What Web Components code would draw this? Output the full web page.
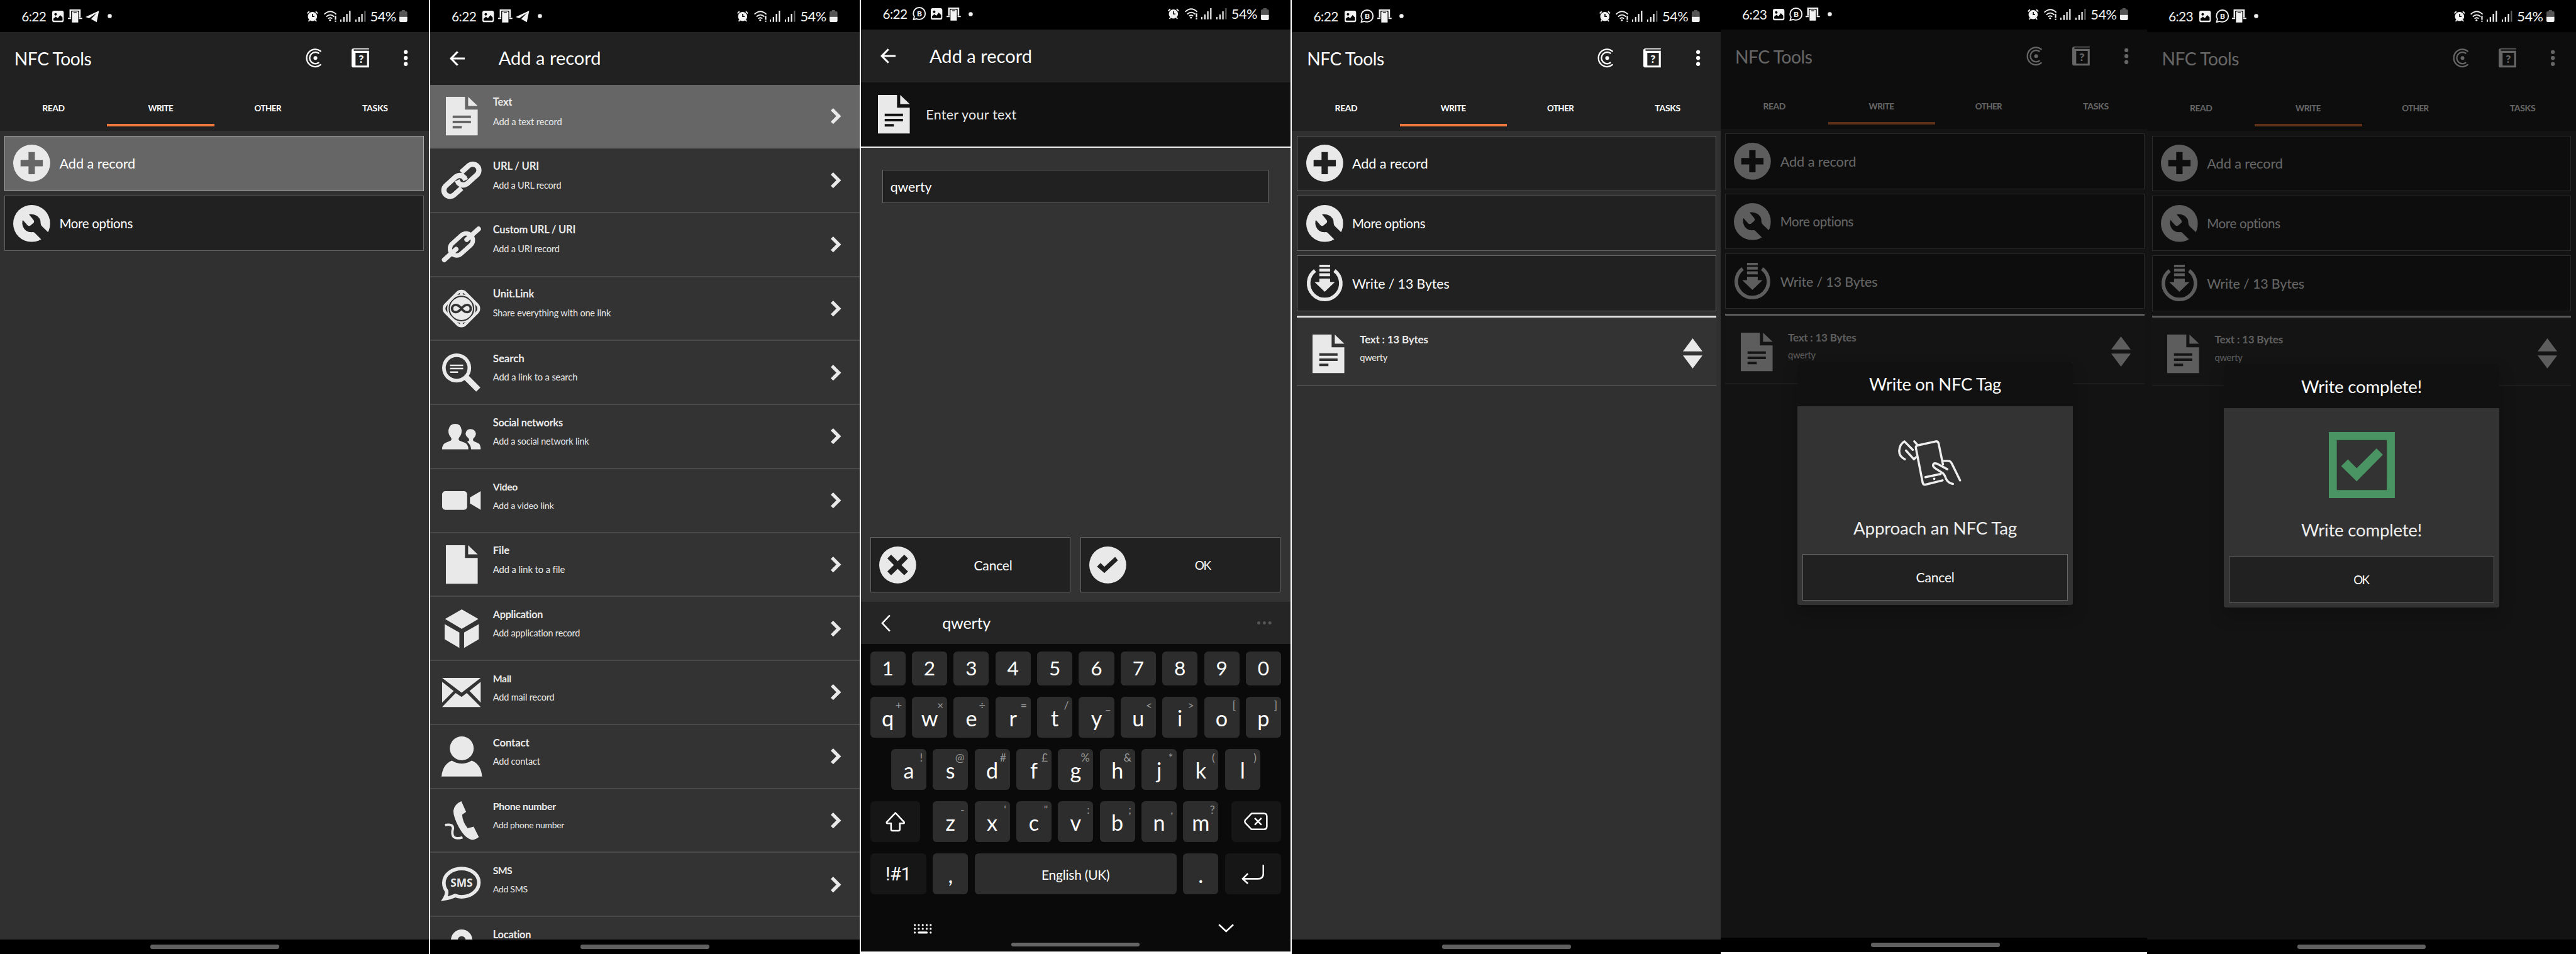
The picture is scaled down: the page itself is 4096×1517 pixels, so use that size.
<!DOCTYPE html>
<html lang="en">
<head>
<meta charset="utf-8">
<title>NFC Tools</title>
<style>
html,body{margin:0;padding:0;background:#fff;overflow:hidden}
body{width:4096px;height:1517px;font-family:Lato,"Open Sans",sans-serif;color:#fff}
screen-gallery{zoom:.6321}
</style>
</head>
<body>
<screen-gallery></screen-gallery>
<script>
const L='#e9e9e9';
/* name: [width, height, svg body] */
const ICONS={
plus:[93,93,`<path fill-rule="evenodd" d="M46.5 0a46.5 46.5 0 1 1 0 93a46.5 46.5 0 1 1 0-93zM38.5 18.5v20h-20v16h20v20h16v-20h20v-16h-20v-20z"/>`],
wrench:[93,93,`<mask id="m"><rect width="93" height="93" fill="#fff"/><path fill="#000" d="M39.500 23.500Q50 21 59 27Q70 34 69 46Q69 51 73 54L93 73.500L79 95L54 70Q51 67 46 68.500Q30 68 25 55Q21 46 24 37.500L36 51Q40 54 44 51L51 45Q54 42 51 37.500z"/></mask><circle cx="46.500" cy="46.500" r="46.500" mask="url(#m)"/>`],
write:[93,94,`<path d="M22 14.500A40.500 40.500 0 1 0 71 14.500" fill="none" stroke="currentColor" stroke-width="9"/><path d="M33 0h27v6H33zM33 10h27v7H33zM33 21.500h27V29H33zM33 35h27v8.500h12L46.500 68 21 43.500h12z"/>`],
cross:[93,93,`<path fill-rule="evenodd" d="M46.500 0a46.500 46.500 0 1 1 0 93a46.500 46.500 0 1 1 0-93zM30 20.500L20.500 30L37 46.500L20.500 63L30 72.500L46.500 56L63 72.500L72.500 63L56 46.500L72.500 30L63 20.500L46.500 37z"/>`],
tick:[93,93,`<path fill-rule="evenodd" d="M46.500 0a46.500 46.500 0 1 1 0 93a46.500 46.500 0 1 1 0-93zM65 26L38 51L28.500 41.500L19.500 50.500L38 67L72 35z"/>`],
doc:[80,97,`<path fill-rule="evenodd" d="M0 0H48V32H80V97H0zM17 47h46v6.500H17zM17 60h46v6.500H17zM17 73h23v6.500H17z"/><path d="M56 0L80 23H56z"/>`],
file:[80,97,`<path d="M0 0H48V32H80V97H0z"/><path d="M56 0L80 23H56z"/>`],
url:[97,97,`<g transform="translate(48.500 48.500) rotate(-42)" fill="none" stroke="currentColor" stroke-width="13"><path d="M-13 15H-38A15.500 15.500 0 0 1 -38 -16H-5Q9 -14 10 0L8 7"/><path d="M13 -15H38A15.500 15.500 0 0 1 38 16H5Q-9 14 -10 0L-8 -7"/></g>`],
curl:[97,97,`<g transform="translate(48.500 48.500) rotate(-42)" fill="none" stroke="currentColor" stroke-linecap="round"><rect x="-33" y="-17" width="66" height="34" rx="17" stroke-width="11"/><path d="M-58 0H-18M58 0H18" stroke-width="12"/></g>`],
unit:[97,97,`<rect x="13.500" y="13.500" width="70" height="70" rx="14" transform="rotate(45 48.500 48.500)" fill="none" stroke="currentColor" stroke-width="7"/><circle cx="48.500" cy="48.500" r="34" fill="none" stroke="currentColor" stroke-width="3.500"/><circle cx="48.500" cy="48.500" r="29"/><path d="M48.500 5v11M48.500 81v11" stroke="currentColor" stroke-width="7"/><path d="M48.500 48.500C42 40 37 39.500 34 39.500a9 9 0 0 0 0 18C38 57.500 42 56 48.500 48.500S59 39.500 63 39.500a9 9 0 0 1 0 18C60 57.500 55 57 48.500 48.500z" fill="none" stroke="#333" stroke-width="6"/>`],
search:[97,97,`<circle cx="36.500" cy="36.500" r="32" fill="none" stroke="currentColor" stroke-width="9"/><path d="M20 28h33v4H20zM20 36h33v4H20zM20 45h20v4H20z"/><path d="M60 60L91 91" stroke="currentColor" stroke-width="15"/>`],
social:[97,64,`<path d="M0 64Q0 50 10 47L22 42Q25 39 22 34Q15 27 16 15Q19 0 33 0Q47 0 49 15Q50 27 43 34Q40 39 43 42L56 47Q66 50 66 64z"/><path d="M73 64Q72 52 63 45L68 42Q69 39 65 35Q59 30 59 24Q61 13 71 13Q83 13 85 24Q85 31 79 36Q76 41 80 44L89 48Q97 50 97 64z"/>`],
video:[97,47,`<rect width="63" height="47" rx="8"/><path d="M70 16L97 0V47L70 31z"/>`],
app:[86,97,`<path d="M43 0L85 24L43 49L1 24zM0 37L37 58V97L0 75zM86 37L49 58V97L86 75z"/>`],
mail:[97,73,`<path d="M0 0H97L49 37zM0 10L29 33L0 62zM97 10L69 33L97 62zM0 73L34 38L49 48L62 38L97 73z"/>`],
contact:[102,101,`<circle cx="51" cy="30" r="30"/><path d="M0 101C2 80 12 66 26 61Q51 76 76 61C90 66 101 80 102 101z"/>`],
phone:[86,97,`<path d="M42 0L54 27L44 34Q45 52 58 68L73 64L86 90Q76 98 67 97Q50 92 36 66Q22 40 22 24Q24 8 42 0z"/><path d="M1 60Q21 56 21 68Q17 84 23 90Q30 96 45 91" fill="none" stroke="currentColor" stroke-width="6"/>`],
sms:[97,89,`<path d="M6 81Q13 70 11 61Q4 52 4.500 40C5 20 25 5 49 5S92.500 20 92.500 40S73 76 49 76Q40 76 33 73Q20 79 6 81z" fill="none" stroke="currentColor" stroke-width="9"/><text x="49" y="50" font-family="Open Sans" font-weight="700" font-size="28" text-anchor="middle" textLength="56" lengthAdjust="spacingAndGlyphs">SMS</text>`],
pin:[54,97,`<path fill-rule="evenodd" d="M27 0a27 27 0 0 1 27 27Q54 50 27 97Q0 50 0 27A27 27 0 0 1 27 0zM27 17a10 10 0 1 0 .1 0z"/>`],
sort:[49,76,`<path d="M24.500 0L49 33H0zM0 43H49L24.500 76z"/>`],
next:[25,40,`<path d="M3 3L20 20L3 37" fill="none" stroke="currentColor" stroke-width="8.500"/>`],
back:[38,38,`<path d="M38 19H4M20 2L3.500 19L20 36" fill="none" stroke="currentColor" stroke-width="5"/>`],
tag:[38,48,`<circle cx="23" cy="24" r="4.800"/><g fill="none" stroke="currentColor" stroke-width="3.600" stroke-linecap="round"><path d="M36 7Q30 2 23 2A22 22 0 0 0 23 46Q30 46 36 41"/><path d="M31 12Q27 9.500 23 9.500A14.500 14.500 0 0 0 23 38.500Q27 38.500 31 36"/></g>`],
book:[44,48,`<path fill-rule="evenodd" d="M6 0H44V2.500H6Q4 4 6 6H44V48H5Q0 48 0 43V5Q0 0 6 0zM10 11V43H39V11z"/><text x="24.500" y="36.500" font-family="Lato" font-weight="900" font-size="28" text-anchor="middle">?</text>`],
dots:[10,42,`<circle cx="5" cy="6" r="5"/><circle cx="5" cy="21" r="5"/><circle cx="5" cy="36" r="5"/>`],
image:[29,29,`<path fill-rule="evenodd" d="M5 0H24Q29 0 29 5V24Q29 29 24 29H5Q0 29 0 24V5Q0 0 5 0zM8.500 6a3.200 3.200 0 1 0 .1 0zM3 23Q3 25 5 25H24Q26 25 26 23V17L20 11L14 19L9 15L3 20z"/>`],
device:[36,33,`<path d="M4 0H32V20H28V5Q28 3 26 3H10Q8 3 8 5V20H4zM0 21H8V24H0zM28 21H36V24H28z"/><path fill-rule="evenodd" d="M12 5H24Q26 5 26 7V33H10V7Q10 5 12 5zM14 7V9H22V7z"/>`],
plane:[34,29,`<path d="M34 0L0 16L9 19L28 6L14 21L28 29z"/>`],
wa:[34,34,`<path d="M2.500 31.500L4.500 24Q2 21 2 16.500A15 15 0 1 1 17 31.500Q13 31.500 10 30z" fill="none" stroke="currentColor" stroke-width="3"/><text x="17.300" y="23.500" font-family="Lato" font-weight="900" font-size="19" text-anchor="middle">B</text>`],
dot:[11,11,`<circle cx="5.500" cy="5.500" r="5.200"/>`],
alarm:[28,28,`<path fill-rule="evenodd" d="M14 3A11.500 11.500 0 1 1 13.900 3zM13 8V16H19V13.500H15.500V8z"/><path d="M1 7L6 2M27 7L22 2M4 27L7 23M24 27L21 23" stroke="currentColor" stroke-width="3"/>`],
wifi:[33,28,`<g fill="none" stroke="currentColor" stroke-width="3"><path d="M1 9Q16 -5 31 9M6 15Q16 6 26 15M10.500 20Q16 15.500 21 20"/></g><circle cx="15.500" cy="24" r="2.300"/><path d="M27.500 13H31V23H27.500zM27.500 25H31V28H27.500z"/>`],
signal:[27,28,`<path d="M0 22h3v6H0zM7.500 16h3.500v12H7.500zM15 8h3.500v20H15zM22.500 0H26v28h-3.500z"/>`],
signal2:[27,28,`<path d="M0 22h3v6H0zM7.500 16h3.500v12H7.500zM15 8h3.500v20H15z"/><path d="M22.500 0H26v28h-3.500z" opacity=".4"/>`],
battery:[20,30,`<path d="M6 0h8v3h3q3 0 3 3v11H0V6q0-3 3-3h3z" fill="#555"/><path d="M0 17H20V27Q20 30 17 30H3Q0 30 0 27z"/>`],
bigtick:[166,166,`<path fill-rule="evenodd" fill="#4a9463" d="M0 0H166V166H0zM20 20V146H146V20zM120 41L136 57L70 124L31 86L48 69L70 91z"/>`],
tap:[186,114,`<g fill="none" stroke="currentColor" stroke-width="5.500" stroke-linecap="round" stroke-linejoin="round"><path d="M17 48Q2 40 3 26Q4 10 16 3L37 24M20 26L40 48L45 43M41 3L49 12"/><path d="M112 101L68 112Q63 112 62 107L45 20Q44 15 49 13L95 3Q100 2 102 8L113 61M69 93L107 85"/><path d="M124 73L98 59Q89 56 88 63Q88 67 94 71L113 83Q118 88 120 95Q124 107 138 110M115 52H126Q132 52 135 58L156 101"/></g><circle cx="91" cy="97" r="3"/>`],
left:[24,44,`<path d="M22 2L3 22L22 42" fill="none" stroke="currentColor" stroke-width="4"/>`],
more:[36,8,`<circle cx="4" cy="4" r="4"/><circle cx="18" cy="4" r="4"/><circle cx="32" cy="4" r="4"/>`],
shift:[50,50,`<path d="M25 2.500L47 26Q48 29 45 29H36V44Q36 47.500 32.500 47.500H17.500Q14 47.500 14 44V29H5Q2 29 3 26z" fill="none" stroke="currentColor" stroke-width="4" stroke-linejoin="round"/>`],
erase:[60,45,`<path d="M19 2.500H50Q57.500 2.500 57.500 10V35Q57.500 42.500 50 42.500H19L3 26Q1 22.500 3 19z" fill="none" stroke="currentColor" stroke-width="4" stroke-linejoin="round"/><path d="M27 14L44 31M44 14L27 31" stroke="currentColor" stroke-width="4"/>`],
enter:[58,50,`<path d="M55 2V24Q55 37 42 37H4M16 24L3 37L16 49" fill="none" stroke="currentColor" stroke-width="4"/>`],
kbd:[45,25,`${[0,1,2,3,4].map(i=>`<circle cx="${2.500+i*10}" cy="3" r="2.500"/><circle cx="${2.500+i*10}" cy="12.500" r="2.500"/>`).join('')}<circle cx="2.500" cy="22" r="2.500"/><circle cx="42.500" cy="22" r="2.500"/><rect x="10" y="19.500" width="25" height="5" rx="2.500"/>`],
down:[40,22,`<path d="M2 2L20 19L38 2" fill="none" stroke="currentColor" stroke-width="4"/>`]
};
const define=(name,css,render)=>customElements.define(name,class extends HTMLElement{
  connectedCallback(){
    if(this.shadowRoot)return;
    this.attachShadow({mode:'open'}).innerHTML=`<style>*{box-sizing:border-box}${css}</style>${render(k=>this.getAttribute(k)||'')}`;
  }
});
define('ui-icon',`:host{display:block;flex:none}svg{display:block;fill:currentColor;overflow:visible}`,a=>{
  const [w,h,b]=ICONS[a('name')];
  return `<svg width="${w}" height="${h}" viewBox="0 0 ${w} ${h}">${b}</svg>`;
});
/* A line of text that takes the width given in "w": a tight line is partly reduced in size, the rest is tracking. */
const ctx=document.createElement('canvas').getContext('2d');
customElements.define('fit-text',class extends HTMLElement{
  connectedCallback(){
    if(this.shadowRoot)return;
    const t=this.getAttribute('t'),w=+this.getAttribute('w'),b=this.getAttribute('b')||400;
    let s=+this.getAttribute('s');
    const f=this.getAttribute('f')||'Lato',box=s*1.2;
    ctx.font=`${b} ${s}px "${f}"`;
    let nat=ctx.measureText(t).width;
    if(w&&nat>w){const k=1-(1-w/nat)*.75;s*=k;nat*=k}
    const ls=w?(w-nat)/(t.length-1):0;
    this.attachShadow({mode:'open'}).innerHTML=`<style>:host{display:block;flex:none;white-space:pre}span{display:block;font:${b} ${s.toFixed(2)}px/${box}px "${f}",sans-serif;letter-spacing:${ls.toFixed(2)}px;margin-right:${(-ls).toFixed(2)}px}</style><span></span>`;
    this.shadowRoot.querySelector('span').textContent=t;
  }
});
const T=(t,w,s,b,f)=>`<fit-text t="${t}" w="${w}" s="${s}" b="${b||400}" f="${f||'Lato'}"></fit-text>`;
const I=(n,c)=>`<ui-icon name="${n}" class="${c||''}"></ui-icon>`;

define('status-bar',`:host{display:flex;flex:none;height:80px;background:#000;color:#f2f2f2;align-items:center;padding:2px 55px 0 54px}
.t{width:71px}.c{width:43px;display:flex;justify-content:center}.r{margin-left:auto;display:flex;align-items:center}
.r>*{margin-right:8px}.r>:nth-child(1){margin-right:14px}.r>:nth-child(3),.r>:nth-child(4){margin-right:11px}.r>:last-child{margin-right:0}`,
a=>`<div class="t">${T(a('time'),63,37)}</div>${a('icons').split(' ').map(n=>`<div class="c">${I(n)}</div>`).join('')}
<div class="r">${I('alarm')}${I('wifi')}${I('signal')}${I('signal2')}${T('54%',66,37)}${I('battery')}</div>`);

define('nav-bar',`:host{display:flex;flex:none;height:36px;background:#000;justify-content:center;padding-top:13px}div{width:324px;height:10px;border-radius:5px;background:#606060}`,()=>`<div></div>`);

define('phone-screen',`:host{display:block;flex:none;overflow:hidden;height:2400px;background:#fff}
.s{width:1080px;height:2400px;display:flex;flex-direction:column;margin-top:var(--up,0)}
.m{flex:1;min-height:0;display:flex;flex-direction:column;overflow:hidden;position:relative;background:#303030}`,
a=>`<div class="s"><status-bar time="${a('time')}" icons="${a('icons')}"></status-bar><div class="m"><slot></slot></div>${a('keyboard')?'':'<nav-bar></nav-bar>'}</div>`);

define('tab-header',`:host{display:block;flex:none;background:#212121;height:249px;padding-left:var(--ox,0)}
.a{display:flex;align-items:center;height:132px;padding:0 54px 0 36px}.a fit-text{margin-right:auto;padding-top:3px}
.a ui-icon:nth-of-type(1){margin-right:76px}.a ui-icon:nth-of-type(2){margin-right:88px}
.t{display:flex;height:106px}.t div{width:269.600px;display:flex;justify-content:center;align-items:center;padding-top:20px;border-bottom:7.200px solid transparent}.t .on{border-color:#ee783e}`,
()=>`<div class="a">${T('NFC Tools',196,48)}${I('tag')}${I('book')}${I('dots')}</div>
<div class="t"><div>${T('READ',57,24,700)}</div><div class="on">${T('WRITE',64,24,700)}</div><div>${T('OTHER',68,24,700)}</div><div>${T('TASKS',65,24,700)}</div></div>`);

define('page-header',`:host{display:flex;flex:none;height:134px;background:#212121;align-items:center;padding-left:49px;gap:85px}`,()=>`${I('back')}${T('Add a record',258,46)}`);

define('action-button',`:host{display:flex;align-items:center;flex:none;height:139.500px;background:#212121;border:2px solid #666;box-sizing:border-box;padding-left:21px;gap:23px}
:host([hot]){background:#666;border-color:#aaa}:host([mid]){gap:0}:host([mid]) div{flex:1;display:flex;justify-content:center}ui-icon{color:${L}}div{padding-top:2px}`,
a=>`${a('icon')?I(a('icon')):''}<div>${T(a('t'),a('w'),35)}</div>`);

define('record-item',`:host{display:flex;flex:none;align-items:center;height:173px;background:#333;border-bottom:3.200px solid #4a4a4a;margin-top:-1px;padding:12px 35px 0 39px;box-sizing:border-box;color:${L}}
div{margin:-28px auto 0 39px;display:flex;flex-direction:column;gap:14px}`,
()=>`${I('doc')}<div>${T('Text : 13 Bytes',172,29,700)}${T('qwerty',70,25)}</div>${I('sort')}`);

define('write-panel',`:host{display:flex;flex-direction:column;padding:12px 13px 0 calc(11px + var(--ox,0px));gap:11.500px}.l{height:6px;background:#e0e0e0}.w{display:flex;flex-direction:column}`,
a=>`<action-button icon="plus" t="Add a record" w="191" ${a('hot')?'hot':''}></action-button><action-button icon="wrench" t="More options" w="185.500"></action-button>`+
(a('full')?`<action-button icon="write" t="Write / 13 Bytes" w="245"></action-button><div class="w"><div class="l"></div><record-item></record-item></div>`:''));

define('record-row',`:host{display:flex;flex:none;height:161px;box-sizing:border-box;border-bottom:3.200px solid #4a4a4a;background:#333;color:${L};align-items:center;padding:0 47px 0 30px}
:host([hot]){background:#666}.i{width:98px;display:flex;justify-content:center;flex:none}.x{margin:-25px auto 0 30px;display:flex;flex-direction:column;gap:17px}
:host([top]){align-items:flex-start}:host([top]) .i{padding-top:31px}:host([top]) .x{margin-top:26.500px}`,
a=>`<div class="i">${I(a('icon'))}</div><div class="x">${T(a('t'),a('w'),28,700)}${a('u')?T(a('u'),a('v'),24.5):''}</div>${a('u')?I('next'):''}`);

define('key-cap',`:host{display:flex;position:relative;flex:none;width:88.700px;height:102px;border-radius:10px;background:#2d2d2d;align-items:center;justify-content:center;box-sizing:border-box}
:host([num]){height:85px}:host([dark]){background:#161616}.h{position:absolute;right:9px;top:4px;color:#999}.b{padding-top:5px}:host([num]) .b{padding:0}`,
a=>`${a('hint')?`<div class="h">${T(a('hint').replace('&','&amp;').replace('<','&lt;').replace('"','&quot;'),0,28)}</div>`:''}${a('icon')?I(a('icon')):`<div class="b">${T(a('t'),a('w')||0,a('s')||(a('t')>='0'&&a('t')<='9'?50:54),400,a('f'))}</div>`}`);

const keys=(s,h)=>[...s].map((c,i)=>`<key-cap t="${c}" ${h?`hint="${[...h][i].replace('&','&amp;').replace('<','&lt;').replace('"','&quot;')}"`:'num="1"'}></key-cap>`).join('');
define('soft-keyboard',`:host{display:flex;flex-direction:column;flex:1;background:#0a0a0a}
.s{height:105px;background:#252525;display:flex;align-items:center;padding:0 47px 0 50px;flex:none}.s fit-text{margin:0 auto 0 130px}.s ui-icon:last-child{color:#555}
.r{display:flex;gap:16.300px;justify-content:center;flex:none;padding-right:1px}.k{padding-top:20px;display:flex;flex-direction:column;gap:29.300px}
.w{width:125px;margin-right:15.500px}.w.e{margin:0 0 0 15.500px}.v{width:141px}.sp{width:508px}
.f{display:flex;justify-content:space-between;padding:75px 142px 0 132px}.h{width:324px;height:10px;border-radius:5px;background:#666;margin:22px 0 0 377px}`,
()=>`<div class="s">${I('left')}${T('qwerty',122,42)}${I('more')}</div><div class="k">
<div class="r">${keys('1234567890')}</div><div class="r">${keys('qwertyuiop','+×÷=/_<>[]')}</div><div class="r">${keys('asdfghjkl','!@#£%&*()')}</div>
<div class="r"><key-cap class="w" icon="shift" dark></key-cap>${keys('zxcvbnm',"-'\":;,?")}<key-cap class="w e" icon="erase" dark></key-cap></div>
<div class="r"><key-cap class="v" t="!#1" w="65" s="50" f="Roboto" dark></key-cap><key-cap t="," s="54"></key-cap><key-cap class="sp" t="English (UK)" w="172" s="35"></key-cap><key-cap t="." s="54"></key-cap><key-cap class="v" icon="enter" dark></key-cap></div></div>
<div class="f">${I('kbd')}${I('down')}</div><div class="h"></div>`);

define('text-editor',`:host{display:flex;flex-direction:column;flex:1;background:#333}
.h{height:163.500px;background:#111;border-bottom:3.200px solid #f2f2f2;display:flex;align-items:center;padding-left:42px;gap:41px;color:${L};flex:none}.h fit-text{padding-top:3px}
.i{margin:55px 56px 0 54px;height:85px;border:2px solid #666;background:#212121;display:flex;align-items:center;padding:4px 0 0 18px;flex:none}
.b{display:flex;gap:24px;margin:840px 25px 23.500px 23px;flex:none}.b>*{flex:1}`,
()=>`<div class="h">${I('doc')}${T('Enter your text',230,34)}</div><div class="i">${T('qwerty',104,35)}</div>
<div class="b"><action-button mid icon="cross" t="Cancel" w="97"></action-button><action-button mid icon="tick" t="OK" w="41.500"></action-button></div><soft-keyboard></soft-keyboard>`);

/* Modal dialog over a dimmed screen. */
define('modal-dialog',`:host{position:absolute;inset:0;background:rgba(0,0,0,.6);display:flex;align-items:center;justify-content:center;box-sizing:border-box}
.d{width:692px;height:611px;display:flex;flex-direction:column;border-radius:5px;overflow:hidden;background:#333;box-shadow:0 22px 40px rgba(0,0,0,.18)}
.t{height:110px;background:#111;display:flex;align-items:center;justify-content:center;flex:none;padding-top:3px}
.c{height:228px;display:flex;align-items:center;justify-content:center;color:#eee;padding-top:59px}.x{display:flex;justify-content:center;color:#eee;padding-top:53px}
action-button{height:116px;margin:auto 12px 12px;padding-left:0}.w{display:flex;flex-direction:column;flex:1}`,
a=>`<div class="d"><div class="t">${T(a('t'),a('w'),46)}</div><div class="w"><div class="c">${I(a('icon'))}</div><div class="x">${T(a('u'),a('v'),46)}</div><action-button mid t="${a('b')}" w="${a('bw')}"></action-button></div></div>`);

const rows=[['doc','Text',48.6,'Add a text record',174],['url','URL / URI',117,'Add a URL record',173],['curl','Custom URL / URI',209,'Add a URI record',168],['unit','Unit.Link',104,'Share everything with one link',297.5],['search','Search',79,'Add a link to a search',213],['social','Social networks',176.5,'Add a social network link',242],['video','Video',62.5,'Add a video link',154],['file','File',41.7,'Add a link to a file',181],['app','Application',126.5,'Add application record',220],['mail','Mail',46.6,'Add mail record',155],['contact','Contact',91.7,'Add contact',119],['phone','Phone number',159,'Add phone number',180],['sms','SMS',49,'Add SMS',87.6]];
define('record-list',`:host{display:block;flex:none}`,()=>rows.map(([i,t,w,u,v],n)=>`<record-row icon="${i}" t="${t}" w="${w}" u="${u}" v="${v}" ${n?'':'hot'}></record-row>`).join('')+`<record-row top icon="pin" t="Location" w="96.600"></record-row>`);

define('screen-gallery',`:host{display:flex;width:6480px;height:2400px;overflow:hidden;background:#fff}
.p1{width:1079px;margin-right:3px}.p2{width:1080px;margin-right:4.300px}.p3{width:1080px;--up:-6px;margin-right:4px}.p4{width:1078px;--ox:1.500px}.p5{width:1072.500px;--up:-5px;--ox:.5px}.p6{width:1080px;--ox:1.500px}`,
()=>`<phone-screen class="p1" time="6:22" icons="image device plane dot"><tab-header></tab-header><write-panel hot="1"></write-panel></phone-screen>
<phone-screen class="p2" time="6:22" icons="image device plane dot"><page-header></page-header><record-list></record-list></phone-screen>
<phone-screen class="p3" time="6:22" icons="wa image device dot" keyboard="1"><page-header></page-header><text-editor></text-editor></phone-screen>
<phone-screen class="p4" time="6:22" icons="image wa device dot"><tab-header></tab-header><write-panel full="1"></write-panel></phone-screen>
<phone-screen class="p5" time="6:23" icons="image wa device dot"><tab-header></tab-header><write-panel full="1"></write-panel><modal-dialog t="Write on NFC Tag" w="334" icon="tap" u="Approach an NFC Tag" v="413" b="Cancel" bw="97"></modal-dialog></phone-screen>
<phone-screen class="p6" time="6:23" icons="image wa device dot"><tab-header></tab-header><write-panel full="1"></write-panel><modal-dialog t="Write complete!" w="304" icon="bigtick" u="Write complete!" v="304" b="OK" bw="41"></modal-dialog></phone-screen>`);
</script>
</body>
</html>
